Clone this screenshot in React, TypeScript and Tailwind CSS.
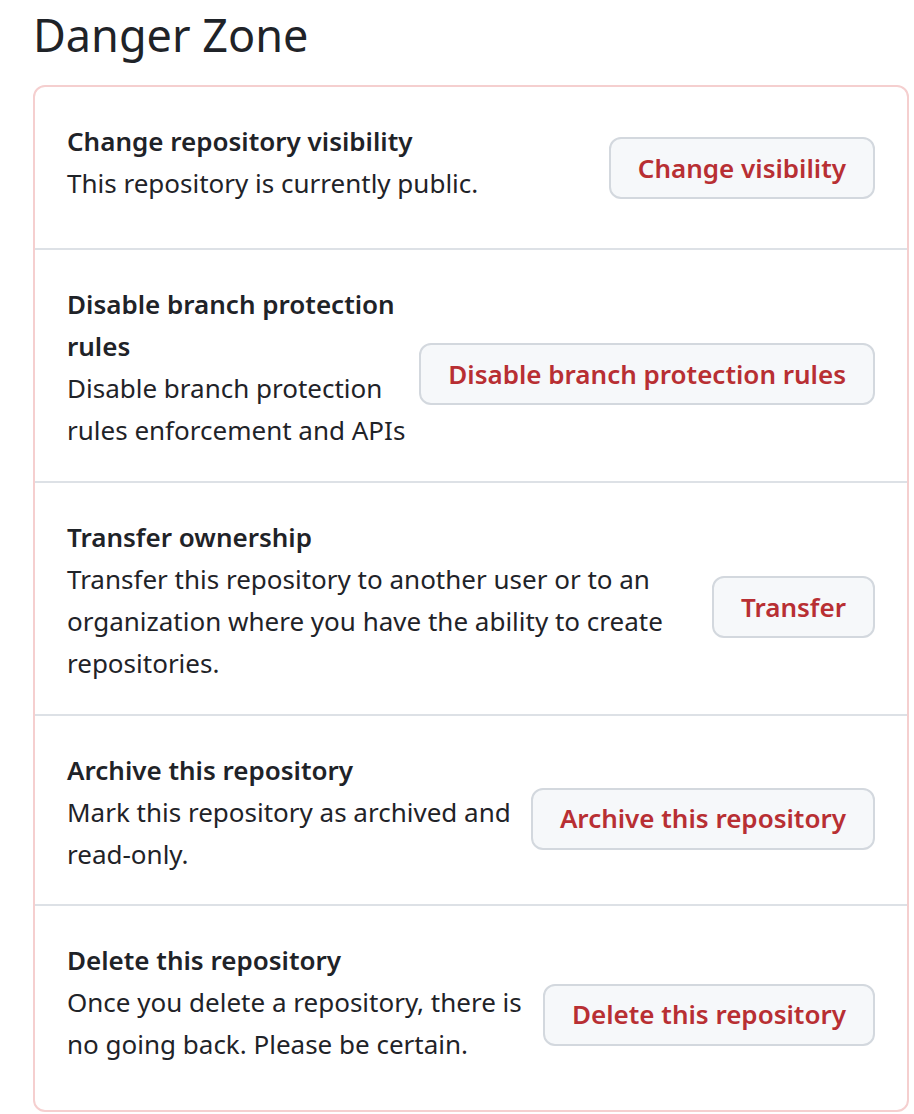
import React from "react";

type Row = {
    title: string;
    description: string;
    button: string;
    rowPad: string;
    btnOffset: string;
};

const rows: Row[] = [
    {
        title: "Change repository visibility",
        description: "This repository is currently public.",
        button: "Change visibility",
        rowPad: "pt-[33px] pb-[44px]",
        btnOffset: "mt-[12px]",
    },
    {
        title: "Disable branch protection rules",
        description: "Disable branch protection rules enforcement and APIs",
        button: "Disable branch protection rules",
        rowPad: "pt-[33px] pb-[30px]",
        btnOffset: "mt-[14px]",
    },
    {
        title: "Transfer ownership",
        description: "Transfer this repository to another user or to an organization where you have the ability to create repositories.",
        button: "Transfer",
        rowPad: "pt-[33px] pb-[30px]",
        btnOffset: "mt-[14px]",
    },
    {
        title: "Archive this repository",
        description: "Mark this repository as archived and read-only.",
        button: "Archive this repository",
        rowPad: "pt-[33px] pb-[29px]",
        btnOffset: "mt-[13px]",
    },
    {
        title: "Delete this repository",
        description: "Once you delete a repository, there is no going back. Please be certain.",
        button: "Delete this repository",
        rowPad: "pt-[33px] pb-[45px]",
        btnOffset: "mt-[25px]",
    },
];

function DangerRow(props: { row: Row; first: boolean }) {
    const { row } = props;
    return (
        <div className={(props.first ? "" : "border-t-2 border-[#dde1e6] ") + "flex flex-row items-center px-[32px] " + row.rowPad}>
            <div className="flex-1 min-w-0 text-[26px] leading-[42px]">
                <div className="font-semibold">{row.title}</div>
                <div>{row.description}</div>
            </div>
            <button className={"shrink-0 h-[62px] px-[27px] rounded-[12px] border-2 border-[#d3d8de] bg-[#f6f8fa] text-[#b82f33] text-[26px] font-semibold whitespace-nowrap " + row.btnOffset}>
                {row.button}
            </button>
        </div>
    );
}

export default function App() {
    return (
        <div className="min-h-screen bg-white text-[#1f2328] font-['Noto_Sans','Open_Sans',sans-serif]">
            <div className="ml-[33px] w-[876px]">
                <h2 className="pt-[7px] mb-[22px] text-[45px] leading-[56px] font-normal">Danger Zone</h2>
                <div className="rounded-[12px] border-2 border-[#f5cfcf]">
                    {rows.map((r, i) => (
                        <DangerRow key={r.title} row={r} first={i === 0} />
                    ))}
                </div>
            </div>
        </div>
    );
}
